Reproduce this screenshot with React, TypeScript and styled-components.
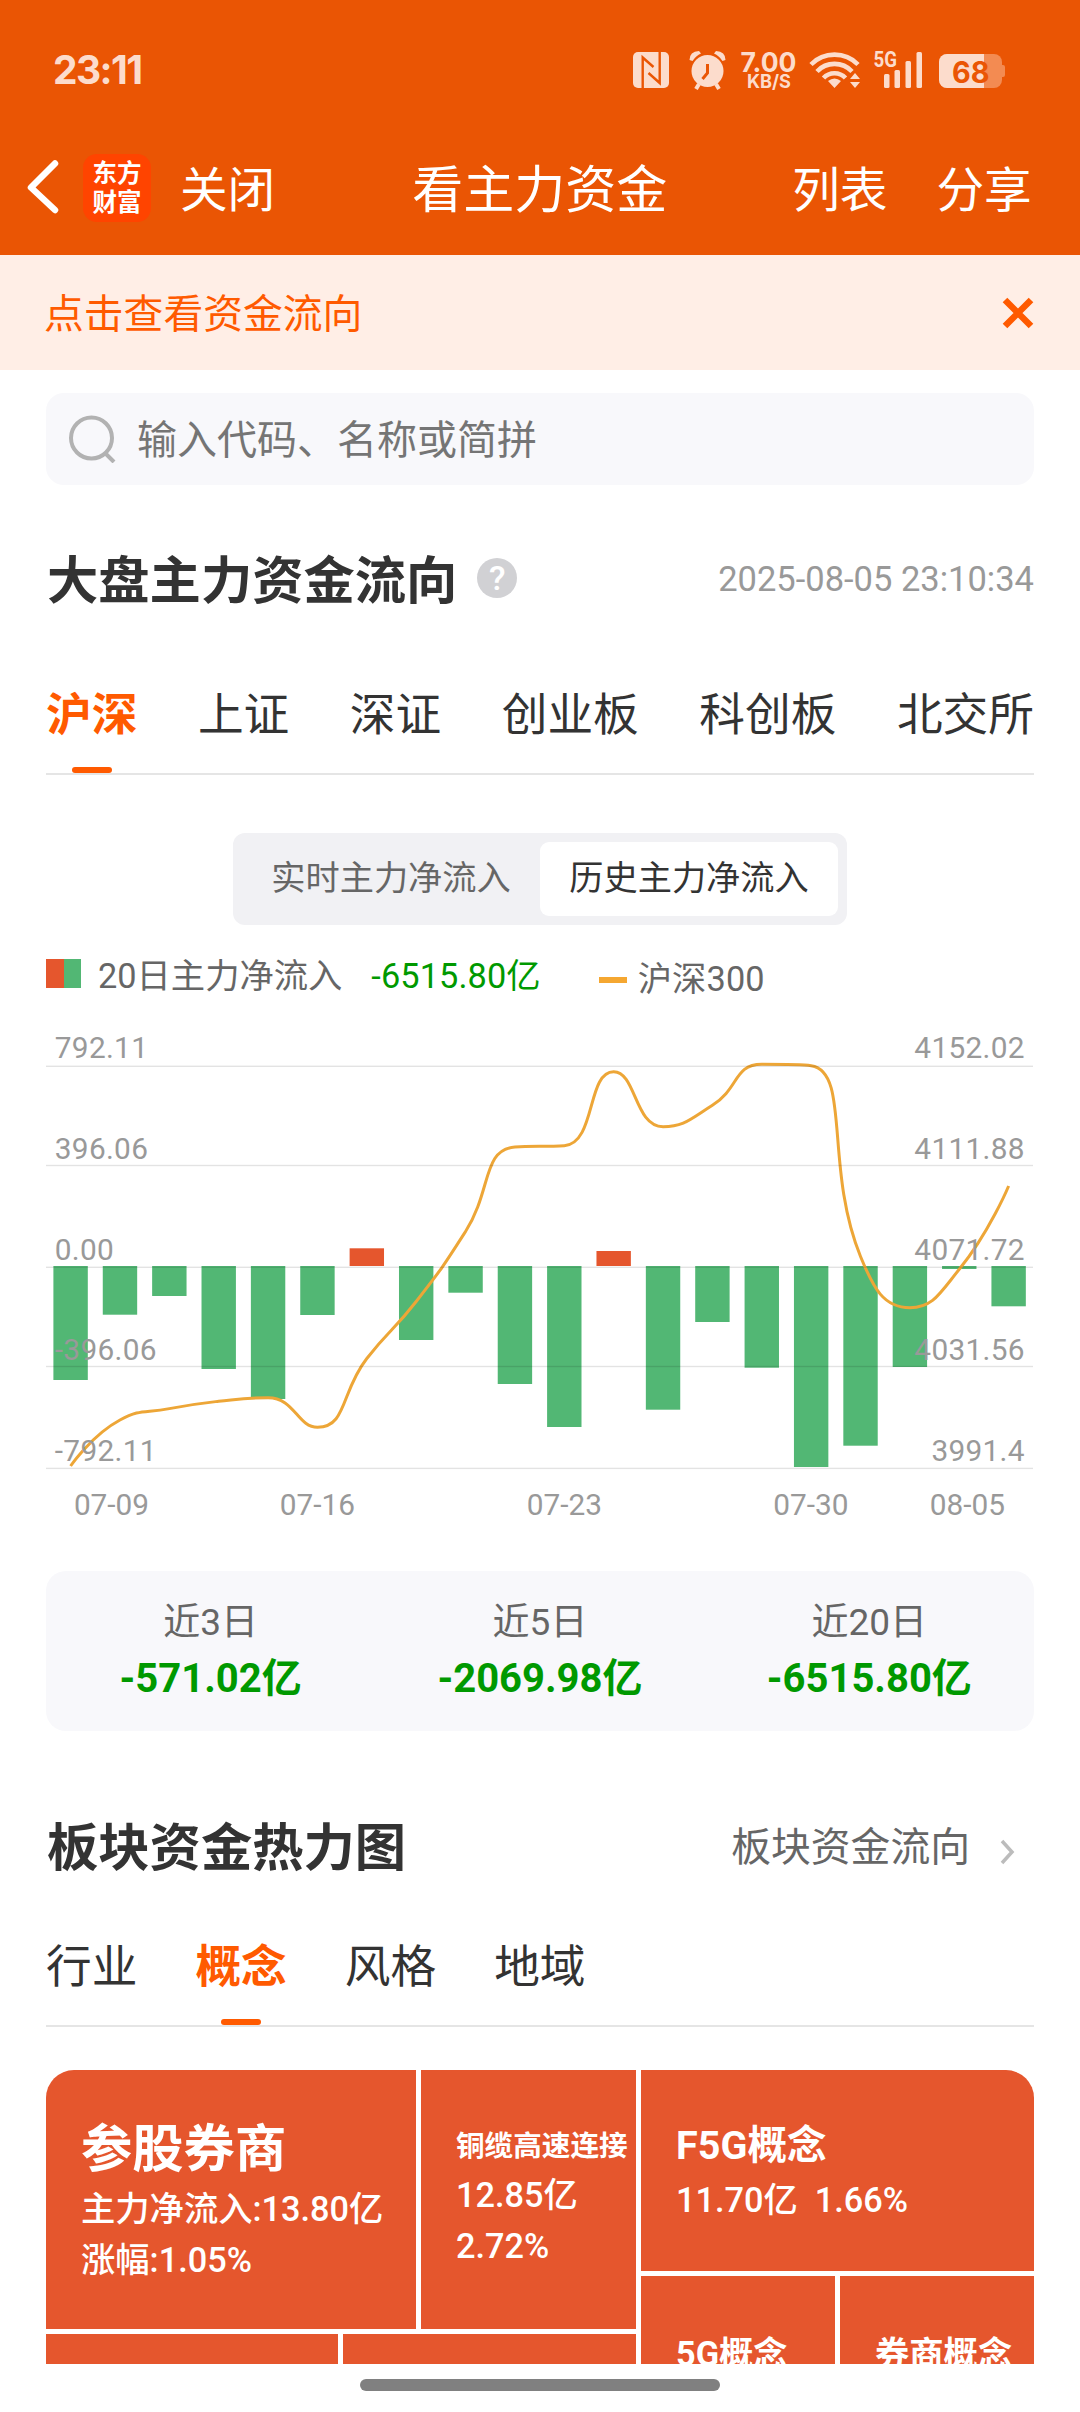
import React from 'react';
import styled, { createGlobalStyle } from 'styled-components';

const SANS = `Roboto, "Noto Sans CJK SC", sans-serif`;
const PALE = '#fcdccc';
const ORANGE = '#ea5504';
const RED = '#e5562d';
const GREEN = '#52b774';
const GRID = 'rgba(0, 0, 0, 0.11)';

const GlobalStyle = createGlobalStyle`
  * { box-sizing: border-box; }
  body { margin: 0; background: #fff; font-family: ${SANS}; color: #333; overflow: hidden; }
`;

const Screen = styled.div`
  width: 1080px;
  height: 2412px;
  display: flex;
  flex-direction: column;
  overflow: hidden;
  background: #fff;
`;

const StatusBar = styled.div`
  height: 120px;
  flex: none;
  display: flex;
  align-items: flex-start;
  padding: 35px 75px 0 53px;
  background: ${ORANGE};
  color: ${PALE};
`;
const Clock = styled.div`
  flex: 1;
  padding-top: 15px;
  font: 700 39px/39px Inter, sans-serif;
  letter-spacing: -1.6px;
`;
const StatusIcons = styled.svg`
  display: block;
  width: 380px;
  height: 65px;
`;

const NavBar = styled.div`
  height: 135px;
  flex: none;
  display: flex;
  align-items: flex-start;
  padding: 34px 48px 0 27px;
  background: ${ORANGE};
  color: #fff;
`;
const BackIcon = styled.svg`
  width: 32px;
  height: 56px;
  margin: 5px 24px 0 0;
`;
const Logo = styled.div`
  width: 68px;
  height: 68px;
  border-radius: 14px;
  background: #ff4400;
  display: flex;
  flex-direction: column;
  align-items: center;
  padding-top: 3px;
  font: 700 24.5px/29px "Noto Sans CJK SC", sans-serif;
`;
const NavText = styled.div<{ $size?: number; $ml: number }>`
  font-size: ${p => p.$size ?? 47.6}px;
  line-height: 68px;
  padding-top: 3px;
  margin-left: ${p => p.$ml}px;
  white-space: nowrap;
`;

const Notice = styled.div`
  height: 115px;
  flex: none;
  display: flex;
  align-items: center;
  justify-content: space-between;
  padding: 0 46px 0 44px;
  background: #ffeee6;
  color: #ff5a00;
  font-size: 39.8px;
`;
const NoticeText = styled.div`
  padding-bottom: 5px;
`;

const Body = styled.div`
  height: 1994px;
  flex: none;
  padding: 23px 46px 0;
  overflow: hidden;
`;
const Search = styled.div`
  height: 92px;
  border-radius: 18px;
  background: #f8f8fb;
  display: flex;
  align-items: center;
  padding-left: 22px;
  gap: 21px;
  color: #757575;
  font-size: 40px;
`;
const SearchText = styled.div`
  padding-bottom: 5px;
`;
const Heading = styled.div<{ $mt: number }>`
  display: flex;
  align-items: center;
  height: 60px;
  margin-top: ${p => p.$mt}px;
`;
const Title = styled.h2`
  margin: 2px 0 0 1px;
  font-size: 51.3px;
  line-height: 60px;
  font-weight: 700;
  color: #333;
`;
const Help = styled.div`
  width: 40px;
  height: 40px;
  margin: -7px 0 0 20px;
  border-radius: 50%;
  background: #d1d1d4;
  color: #fff;
  text-align: center;
  font: 500 34px/41px Roboto, sans-serif;
`;
const Stamp = styled.div`
  margin: -4px 0 0 auto;
  font-size: 34.5px;
  color: #999;
`;
const More = styled.div`
  margin-left: auto;
  display: flex;
  align-items: center;
  gap: 30px;
  padding-right: 19px;
  font-size: 39.8px;
  line-height: 60px;
  color: #666;
`;
const Chevron = styled.svg`
  width: 15px;
  height: 26px;
  margin-top: 7px;
`;

const Tabs = styled.div<{ $gap?: number; $mt: number }>`
  display: flex;
  justify-content: ${p => (p.$gap ? 'flex-start' : 'space-between')};
  gap: ${p => p.$gap ?? 0}px;
  height: 102px;
  margin-top: ${p => p.$mt}px;
  border-bottom: 2px solid #e5e5e5;
`;
const Tab = styled.div<{ $active?: boolean }>`
  display: flex;
  flex-direction: column;
  align-items: center;
  justify-content: space-between;
  font-size: 45.7px;
  line-height: 85px;
  white-space: nowrap;
  font-weight: ${p => (p.$active ? 700 : 400)};
  color: ${p => (p.$active ? '#ff5a00' : '#333')};
  &::after {
    content: '';
    width: 40px;
    height: 6px;
    border-radius: 3px;
    background: ${p => (p.$active ? '#ff5a00' : 'transparent')};
  }
`;

const Segmented = styled.div`
  width: 614px;
  height: 92px;
  margin: 58px auto 0;
  padding: 9px;
  display: grid;
  grid-template-columns: 298px 298px;
  border-radius: 12px;
  background: #f1f1f4;
`;
const Segment = styled.div<{ $active?: boolean }>`
  border-radius: 9px;
  text-align: center;
  font-size: 34.2px;
  line-height: 73px;
  background: ${p => (p.$active ? '#fff' : 'transparent')};
  color: ${p => (p.$active ? '#333' : '#666')};
`;

const Legend = styled.div`
  display: flex;
  height: 73px;
  margin-top: 20px;
  font-size: 34.3px;
  line-height: 62px;
  color: #666;
`;
const Swatch = styled.div`
  width: 35px;
  height: 29px;
  margin: 14px 17px 0 0;
  background: linear-gradient(90deg, ${RED} 50%, ${GREEN} 50%);
`;
const Total = styled.div`
  margin-left: 29px;
  letter-spacing: 0.1px;
  color: #009900;
`;
const Dash = styled.div`
  width: 28px;
  height: 6px;
  margin: 32px 11px 0 58px;
  background: #f5a731;
`;
const IndexName = styled.div`
  padding-top: 3px;
  letter-spacing: 0.1px;
`;

const Chart = styled.svg`
  display: block;
  width: 1080px;
  height: 530px;
  margin: 0 -46px;
  font-family: Roboto, sans-serif;
  font-size: 29.8px;
  fill: #999;
`;
const AxisText = styled.text`
  letter-spacing: 0.3px;
`;

const Stats = styled.div`
  height: 160px;
  margin-top: 23px;
  display: grid;
  grid-template-columns: repeat(3, 1fr);
  border-radius: 20px;
  background: #f8f8fb;
  text-align: center;
`;
const StatLabel = styled.div`
  margin-top: 23px;
  height: 58px;
  font-size: 37px;
  line-height: 58px;
  color: #666;
`;
const StatValue = styled.div`
  font-size: 40px;
  line-height: 54px;
  font-weight: 700;
  color: #009900;
`;

const HeatMap = styled.div`
  display: flex;
  gap: 5px;
  height: 294px;
  margin-top: 43px;
  border-radius: 28px 28px 0 0;
  overflow: hidden;
`;
const Column = styled.div<{ $w: number }>`
  width: ${p => p.$w}px;
  display: flex;
  flex-direction: column;
  gap: 5px;
`;
const Row = styled.div<{ $h: number }>`
  height: ${p => p.$h}px;
  flex: none;
  display: flex;
  gap: 5px;
`;
const Tile = styled.div<{ $w: number; $pt?: number }>`
  width: ${p => p.$w}px;
  padding: ${p => p.$pt ?? 0}px 0 0 35px;
  background: ${RED};
  color: #fff;
  font-weight: 500;
  font-size: 34.3px;
  line-height: 51.2px;
  white-space: pre;
  overflow: hidden;
`;
const TileName = styled.div<{ $size?: number; $lh?: number }>`
  font-weight: 700;
  font-size: ${p => p.$size ?? 34.3}px;
  line-height: ${p => p.$lh ?? 51}px;
`;

const HomeArea = styled.div`
  flex: 1;
  display: flex;
  justify-content: center;
  padding-top: 15px;
`;
const HomePill = styled.div`
  width: 360px;
  height: 12px;
  border-radius: 6px;
  background: #808080;
`;

type Pt = [number, number];
const STEP = 49.37;
const X0 = 70.6;
const ZERO = 248;
const barEnds = [362, 296.7, 278, 351, 381, 297, 230.3, 322, 274.7, 366, 409, 233, 391.7, 304, 349.7, 449, 427.7, 349, 251, 288.3];
const indexYs = [448, 402, 390.6, 383.3, 379.7, 409.3, 340.5, 283.5, 213.5, 129, 127.7, 53.7, 108.7, 87.3, 46.3, 47.7, 238.5, 289.7, 251.3, 168];
const gridYs = [48.3, 147.5, 249.3, 348.5, 450.4];
const leftLabels = ['792.11', '396.06', '0.00', '-396.06', '-792.11'];
const rightLabels = ['4152.02', '4111.88', '4071.72', '4031.56', '3991.4'];
const labelYs = [40.3, 140.7, 241.5, 341.8, 443];
const dates: [number, string][] = [[111.5, '07-09'], [317.3, '07-16'], [564.3, '07-23'], [810.8, '07-30'], [967.4, '08-05']];

const clamp = (v: number, a: number, b: number) => Math.max(Math.min(a, b), Math.min(Math.max(a, b), v));

/* Smoothed line whose control points never leave the span of their segment. */
function smoothPath(pts: Pt[], smooth: number) {
  let d = `M${pts[0][0]} ${pts[0][1]}`;
  let out: Pt = pts[0];
  for (let i = 1; i < pts.length; i++) {
    const p = pts[i];
    const prev = pts[i - 1];
    const next = pts[i + 1];
    let cin: Pt = p;
    let nextOut: Pt = p;
    if (next) {
      const lp = Math.hypot(p[0] - prev[0], p[1] - prev[1]);
      const ln = Math.hypot(next[0] - p[0], next[1] - p[1]);
      const r = ln / (ln + lp);
      nextOut = [0, 1].map(k => clamp(p[k] + (next[k] - prev[k]) * smooth * r, p[k], next[k])) as Pt;
      cin = [0, 1].map(k => clamp(p[k] - ((nextOut[k] - p[k]) * lp) / ln, prev[k], p[k])) as Pt;
      nextOut = [0, 1].map(k => p[k] + ((p[k] - cin[k]) * ln) / lp) as Pt;
    }
    d += `C${out.join(' ')} ${cin.join(' ')} ${p.join(' ')}`;
    out = nextOut;
  }
  return d;
}
const indexLine = smoothPath(indexYs.map((y, i) => [X0 + STEP * i, y] as Pt), 0.5);

const FlowChart = () => (
  <Chart viewBox="0 0 1080 530">
    {barEnds.map((y, i) => (
      <rect key={i} x={X0 + STEP * i - 17.2} y={Math.min(y, ZERO)} width={34.4} height={Math.abs(y - ZERO)} fill={y < ZERO ? RED : GREEN} />
    ))}
    <path d={indexLine} fill="none" stroke="#eda637" strokeWidth="3" />
    {gridYs.map(y => (
      <rect key={y} x="46" y={y - 0.7} width="987" height="1.4" fill={GRID} />
    ))}
    {leftLabels.map((t, i) => (
      <AxisText key={t} x="54.8" y={labelYs[i]}>{t}</AxisText>
    ))}
    {rightLabels.map((t, i) => (
      <AxisText key={t} x="1024.800" y={labelYs[i]} textAnchor="end">{t}</AxisText>
    ))}
    {dates.map(([x, t]) => (
      <text key={t} x={x} y="496.7" textAnchor="middle">{t}</text>
    ))}
  </Chart>
);

const SystemIcons = () => (
  <StatusIcons viewBox="625 35 380 65" fill={PALE}>
    <rect x="633" y="52" width="36" height="36" rx="5" />
    <path d="M642.7 88V57.5L653.5 67M659.700 52V83L648.500 73" fill="none" stroke={ORANGE} strokeWidth="2.4" />
    <circle cx="707.5" cy="71" r="16" />
    <path d="M689.500 60q0-8.500 9.500-9l2 2.500q-5 2-8.500 7.500zM725.500 60q0-8.500-9.500-9l-2 2.500q5 2 8.500 7.500z" />
    <path d="M699 84l-3 5M716 84l3 5" stroke={PALE} strokeWidth="4" />
    <path d="M707.500 64v9l-5 6" fill="none" stroke={ORANGE} strokeWidth="3" />
    <text x="740.5" y="71.5" fontFamily="Inter, sans-serif" fontWeight="700" fontSize="27" textLength="56" lengthAdjust="spacingAndGlyphs">7.00</text>
    <text x="747" y="88" fontFamily="Inter, sans-serif" fontWeight="700" fontSize="18.5" textLength="44" lengthAdjust="spacingAndGlyphs">KB/S</text>
    <g fill="none" stroke={PALE} strokeWidth="4.6">
      <path d="M811 64.5a33 33 0 0 1 47 0" />
      <path d="M817 71.5a24 24 0 0 1 35 0" />
      <path d="M823.5 78a15 15 0 0 1 22 0" />
    </g>
    <path d="M834.5 88l-6.500-7q6.500-5 13 0zM855 73l5 6h-10zM855 88l5-6h-10z" />
    <text x="873.5" y="67" fontFamily="Roboto, sans-serif" fontWeight="700" fontSize="21.5" textLength="23.5" lengthAdjust="spacingAndGlyphs">5G</text>
    <rect x="884" y="74" width="5.5" height="14" rx="1.5" />
    <rect x="894.5" y="70" width="5.5" height="18" rx="1.5" />
    <rect x="905.5" y="61" width="5.5" height="27" rx="1.5" />
    <rect x="916.5" y="52" width="5.5" height="36" rx="1.5" />
    <rect x="939" y="54" width="63" height="34" rx="8" fill="#f38b52" />
    <rect x="1000" y="65" width="5" height="12" rx="2" fill="#f38b52" />
    <path d="M984 54H947a8 8 0 0 0-8 8v18a8 8 0 0 0 8 8h37z" />
    <text x="952" y="82.500" fill={ORANGE} fontFamily="Inter, sans-serif" fontWeight="700" fontSize="29.5" textLength="37.5" lengthAdjust="spacingAndGlyphs">68</text>
  </StatusIcons>
);

export default function App() {
  return (
    <Screen>
      <GlobalStyle />
      <StatusBar>
        <Clock>23:11</Clock>
        <SystemIcons />
      </StatusBar>
      <NavBar>
        <BackIcon viewBox="0 0 32 56" fill="none" stroke="#fff" strokeWidth="6.5" strokeLinecap="round" strokeLinejoin="round">
          <path d="M28 4.500L4 28.500l24 22.500" />
        </BackIcon>
        <Logo><span>东方</span><span>财富</span></Logo>
        <NavText $ml={29}>关闭</NavText>
        <NavText $ml={137} $size={51}>看主力资金</NavText>
        <NavText $ml={125}>列表</NavText>
        <NavText $ml={49}>分享</NavText>
      </NavBar>
      <Notice>
        <NoticeText>点击查看资金流向</NoticeText>
        <svg width="32" height="32" viewBox="0 0 32 32" stroke="#ff5a00" strokeWidth="6.5">
          <path d="M3 3l26 26M29 3L3 29" />
        </svg>
      </Notice>
      <Body>
        <Search>
          <svg width="48" height="48" viewBox="0 0 48 48" fill="none" stroke="#b2b2b2" strokeWidth="4">
            <circle cx="23.500" cy="23" r="20.500" />
            <path d="M37 38l9 9" />
          </svg>
          <SearchText>输入代码、名称或简拼</SearchText>
        </Search>
        <Heading $mt={66}>
          <Title>大盘主力资金流向</Title>
          <Help>?</Help>
          <Stamp>2025-08-05 23:10:34</Stamp>
        </Heading>
        <Tabs $mt={62}>
          <Tab $active>沪深</Tab>
          <Tab>上证</Tab>
          <Tab>深证</Tab>
          <Tab>创业板</Tab>
          <Tab>科创板</Tab>
          <Tab>北交所</Tab>
        </Tabs>
        <Segmented>
          <Segment>实时主力净流入</Segment>
          <Segment $active>历史主力净流入</Segment>
        </Segmented>
        <Legend>
          <Swatch />
          <div>20日主力净流入</div>
          <Total>-6515.80亿</Total>
          <Dash />
          <IndexName>沪深300</IndexName>
        </Legend>
        <FlowChart />
        <Stats>
          <div><StatLabel>近3日</StatLabel><StatValue>-571.02亿</StatValue></div>
          <div><StatLabel>近5日</StatLabel><StatValue>-2069.98亿</StatValue></div>
          <div><StatLabel>近20日</StatLabel><StatValue>-6515.80亿</StatValue></div>
        </Stats>
        <Heading $mt={87}>
          <Title>板块资金热力图</Title>
          <More>
            板块资金流向
            <Chevron viewBox="0 0 15 26" fill="none" stroke="#bcbcbc" strokeWidth="3.5">
              <path d="M2 2l10 11L2 24" />
            </Chevron>
          </More>
        </Heading>
        <Tabs $mt={47} $gap={58}>
          <Tab>行业</Tab>
          <Tab $active>概念</Tab>
          <Tab>风格</Tab>
          <Tab>地域</Tab>
        </Tabs>
        <HeatMap>
          <Column $w={590}>
            <Row $h={259}>
              <Tile $w={370} $pt={46}>
                <TileName $size={51.3} $lh={67.5}>参股券商</TileName>
                <div>主力净流入:13.80亿</div>
                <div>涨幅:1.05%</div>
              </Tile>
              <Tile $w={215} $pt={52}>
                <TileName $size={28.6} $lh={48}>铜缆高速连接</TileName>
                <div>12.85亿</div>
                <div>2.72%</div>
              </Tile>
            </Row>
            <Row $h={40}>
              <Tile $w={292} />
              <Tile $w={293} />
            </Row>
          </Column>
          <Column $w={393}>
            <Row $h={201}>
              <Tile $w={393} $pt={46}>
                <TileName $size={39.600} $lh={59}>F5G概念</TileName>
                <div>11.70亿  1.66%</div>
              </Tile>
            </Row>
            <Row $h={120}>
              <Tile $w={194} $pt={53}><TileName>5G概念</TileName></Tile>
              <Tile $w={194} $pt={53}><TileName>券商概念</TileName></Tile>
            </Row>
          </Column>
        </HeatMap>
      </Body>
      <HomeArea><HomePill /></HomeArea>
    </Screen>
  );
}
